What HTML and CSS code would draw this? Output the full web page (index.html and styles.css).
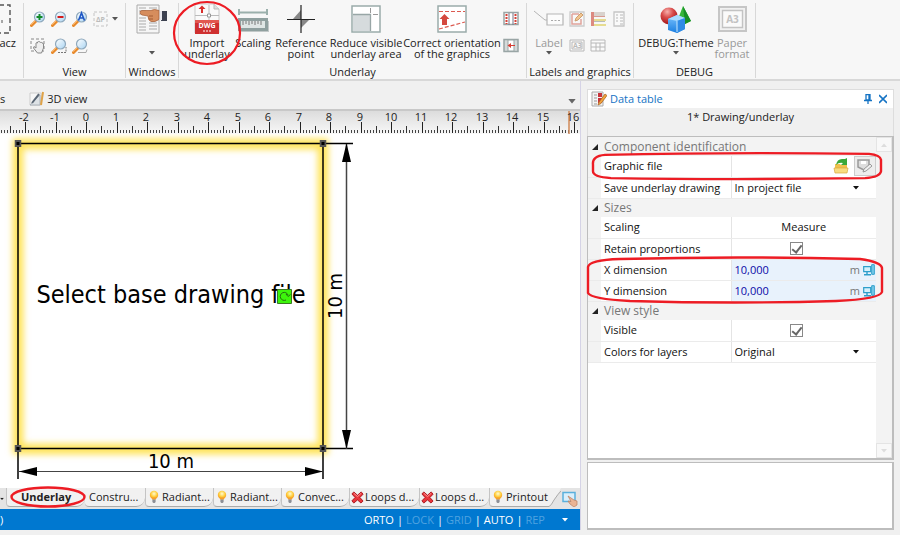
FILE: index.html
```html
<!DOCTYPE html>
<html lang="en">
<head>
<meta charset="utf-8">
<title>Drawing editor</title>
<link rel="stylesheet" href="styles.css">
</head>
<body>
<svg class="defs" aria-hidden="true">
  <defs>
    <linearGradient id="lens" x1="0" y1="0" x2="1" y2="1"><stop offset="0" stop-color="#fff"/><stop offset="1" stop-color="#a9d4f2"/></linearGradient>
    <linearGradient id="cube" x1="0" y1="0" x2="0" y2="1"><stop offset="0" stop-color="#7cc4ff"/><stop offset="1" stop-color="#1a7ee0"/></linearGradient>
    <radialGradient id="ball" cx=".4" cy=".25" r=".7"><stop offset="0" stop-color="#f7b0ac"/><stop offset=".5" stop-color="#d84a48"/><stop offset="1" stop-color="#a81c20"/></radialGradient>
    <radialGradient id="glowbulb" cx=".5" cy=".35" r=".6"><stop offset="0" stop-color="#fffbd0"/><stop offset=".6" stop-color="#ffce3c"/><stop offset="1" stop-color="#f59a22"/></radialGradient>
    <filter id="soft" x="-10%" y="-10%" width="120%" height="120%" color-interpolation-filters="sRGB"><feGaussianBlur stdDeviation="3"/></filter>
    <symbol id="mag" viewBox="0 0 16 16">
      <path d="M1.500 14.500 6 10" stroke="#e88a2c" stroke-width="3" stroke-linecap="round"/>
      <path d="M1.200 13.600 5 9.800" stroke="#ffc27a" stroke-width="1"/>
      <circle cx="9.500" cy="6" r="5" fill="url(#lens)" stroke="#8fa9bd" stroke-width="1.200"/>
    </symbol>
    <symbol id="bulb" viewBox="0 0 10 14">
      <circle cx="5" cy="5" r="4.200" fill="url(#glowbulb)"/>
      <path d="M3.200 7.500h3.600v2.200H3.200z" fill="#f5a02c"/>
      <path d="M3.400 9.600h3.200v2.400l-1 1H4.400l-1-1z" fill="#8c8f96"/>
    </symbol>
    <symbol id="cross" viewBox="0 0 14 14">
      <path d="M3 1 7 4.600 11 1 13 3.400 9.600 7 13 10.800 10.800 13 7 9.600 3 13 1 10.600 4.400 7 1 3.200z" fill="#e8353b" stroke="#a9151c" stroke-width="1"/>
      <path d="M3 2.400 7 6l4-3.600" stroke="#ff9a98" fill="none"/>
    </symbol>
    <symbol id="pc" viewBox="0 0 12 12">
      <path d="M.7 2.600h7v5h-7z" fill="#d5f0fb" stroke="#2e9fcb" stroke-width="1.200"/>
      <path d="M8.700.7h2.600v9.600H8.700z" fill="#7fcdea" stroke="#2e9fcb"/>
      <path d="M4 8v2M1 10.800h7" stroke="#2e9fcb" stroke-width="1.400"/>
    </symbol>
    <symbol id="down" viewBox="0 0 6 4"><path d="M0 0h6L3 3.500z" fill="currentColor"/></symbol>
    <symbol id="open" viewBox="0 0 6 6"><path d="M6 0v6H0z" fill="#222"/></symbol>
    <symbol id="handle" viewBox="0 0 7 7"><path d="M0 0h7v7H0z" fill="#555"/><path d="M2 2h3v3H2z" fill="#000"/></symbol>
  </defs>
</svg>

<header class="ribbon">
  <section class="group g-edge">
    <div class="tools">
      <button class="big cut" type="button">
        <svg class="ico" viewBox="0 0 32 34"><path d="M3 2h27v28H3z" fill="none" stroke="#555" stroke-width="1.400" stroke-dasharray="5 3"/><path d="M22 17v3" stroke="#555"/></svg>
        <span>Zaznacz</span>
      </button>
    </div>
  </section>

  <section class="group g-view">
    <div class="tools icons four">
      <button type="button" aria-label="Zoom in"><svg><use href="#mag"/><path d="M9.500 3v6M6.500 6h6" stroke="#138a2a" stroke-width="2"/></svg></button>
      <button type="button" aria-label="Zoom out"><svg><use href="#mag"/><path d="M6.500 6h6" stroke="#d41c1c" stroke-width="2"/></svg></button>
      <button type="button" aria-label="Zoom all"><svg><use href="#mag"/><path d="M6.500 9.500 9.500 2l3 7.500M7.500 7h4" fill="none" stroke="#1d55c4" stroke-width="1.600"/></svg></button>
      <button type="button" class="off" aria-label="Pressure view"><svg class="wide"><path d="M1 1h13v14H1z" fill="none" stroke="#c4c4c4" stroke-dasharray="3 2"/><text x="3" y="11" class="mini">ΔP</text><g color="#555"><use href="#down" x="19" y="6" width="6" height="4"/></g></svg></button>
      <button type="button" aria-label="Pan"><svg><path d="M1 1h13v12H1z" fill="none" stroke="#888" stroke-dasharray="3 2"/><path d="M4 8.500 6 10V5q1-1 1.500 0V4q1-1 1.500 0 1-1 1.500 0.500 1.500-.5 1.500.5 1.500 0 1.500 1v4l-2 5h-4L3.500 10z" fill="#eee" stroke="#888"/></svg></button>
      <button type="button" aria-label="Zoom window"><svg><use href="#mag"/><path d="M7 14.500h8V9" fill="none" stroke="#777" stroke-dasharray="2 1"/></svg></button>
      <button type="button" aria-label="Zoom page"><svg><use href="#mag"/><path d="M6 14.500h8l1-3" fill="none" stroke="#aaa"/></svg></button>
    </div>
    <h2>View</h2>
  </section>

  <section class="group g-win">
    <div class="tools">
      <button class="big" type="button" aria-label="Windows">
        <svg class="ico" viewBox="0 0 32 34"><path d="M1 2h22v28H1z" fill="#f6f6f6" stroke="#aaa"/><path d="M3 5h7M3 8h7M3 11h7M3 15h7M3 18h7M3 21h7M3 24h7M3 27h7M13 5h8M13 20h8M13 23h8M13 26h8" stroke="#aaa"/><path d="M26 8h5v10h-6z" fill="#3c4150"/><path d="M23 8h3v9h-3z" fill="#e8e8ee"/><path d="M4 9.500q0-2 2-2h9q3-2 8 0v9q-4 3-8 2-3-1-3-5.500l-6-1q-2-1-2-2.500z" fill="#d68d5d" stroke="#a45c34" stroke-width=".7"/><path d="M13 13h4M13 16h4" stroke="#a45c34"/></svg>
        <svg class="drop low"><use href="#down"/></svg>
      </button>
    </div>
    <h2>Windows</h2>
  </section>

  <section class="group g-under">
    <div class="tools under">
      <button class="big marked" type="button">
        <svg class="ico" viewBox="0 0 32 34"><path d="M4 1h19l5 5v24H4z" fill="#fafafa" stroke="#c9c9c9"/><path d="M23 1v5h5" fill="#ddd" stroke="#bbb"/><path d="M18 2v16M4 12.500h24" stroke="#bbb"/><path d="M16.500 11h3v3h-3z" fill="#fff" stroke="#999"/><path d="M11 2.500 14.500 6H12v4h-2V6H7.500z" fill="#d92d2a"/><path d="M4 17h24v14H4z" fill="#cf3030"/><path d="M4 17h24v3H4z" fill="#e2574f"/><text x="16" y="25" text-anchor="middle" class="dwg">DWG</text><path d="M12 28h2M15 28h2M18 28h2" stroke="#fff"/></svg>
        <span>Import<br>underlay</span>
        <svg class="mark-circle" viewBox="0 0 70 66"><ellipse cx="35" cy="33" rx="33" ry="31" fill="none" stroke="#ed1c24" stroke-width="2.200"/></svg>
      </button>
      <button class="big" type="button">
        <svg class="ico" viewBox="0 0 32 34"><path d="M2 9.500h28M2 6v6M30 6v6" stroke="#9bb0ac" stroke-width="2" fill="none"/><path d="M4 18h28v11H4z" fill="#c2c8c8"/><path d="M2.500 16.500h27v10h-27z" fill="#dfe6e5" stroke="#8fa09f" stroke-width="3"/><path d="M6 18v4M9 18v3M12 18v4M15 18v3M18 18v4M21 18v3M24 18v4" stroke="#777"/></svg>
        <span>Scaling</span>
      </button>
      <button class="big" type="button">
        <svg class="ico" viewBox="0 0 32 34"><path d="M16 7v9H8zM16 17v8l8-8z" fill="#888"/><path d="M16 2v28M2 16.500h28" stroke="#222" stroke-width="1.200"/></svg>
        <span>Reference<br>point</span>
      </button>
      <button class="big" type="button">
        <svg class="ico" viewBox="0 0 32 34"><path d="M2 3h28v26H2z" fill="#fff" stroke="#9bacab" stroke-width="1.500"/><path d="M3 12h17v16H3z" fill="#d6dbdd"/><path d="M3 11.500h17.500V28" fill="none" stroke="#98a6a6" stroke-width="1.300"/><path d="M20.500 5v5M23 11.500h5" stroke="#999"/></svg>
        <span>Reduce visible<br>underlay area</span>
      </button>
      <button class="big" type="button">
        <svg class="ico" viewBox="0 0 32 34"><path d="M2 3h28v26H2z" fill="#fff" stroke="#9bacab" stroke-width="1.500"/><path d="M3 8.500h26M3 26l26-7" stroke="#dc5a50" stroke-width="1.200" stroke-dasharray="4 2"/><path d="m8.500 11 5 5h-2.500v6h-5v-6H3.500z" fill="#d4493f"/></svg>
        <span>Correct orientation<br>of the graphics</span>
      </button>
      <div class="icons one">
        <button type="button" aria-label="Split columns"><svg><path d="M1 1.500h14v12H1z" fill="#fff" stroke="#99a5a5" stroke-width="1.500"/><path d="M6 2v12M10 2v12" stroke="#778"/><path d="M3.500 3v10M12.500 3v10" stroke="#d83f35" stroke-width="2" stroke-dasharray="2 1"/></svg></button>
        <button type="button" aria-label="Shift column"><svg><path d="M1 1.500h14v12H1z" fill="#d5dada" stroke="#99a5a5" stroke-width="1.500"/><path d="M5 2h6v11H5z" fill="#fff" stroke="#99a5a5"/><path d="M4.500 7.500 8 5v2h4v1H8v2z" fill="#d83f35"/></svg></button>
      </div>
    </div>
    <h2>Underlay</h2>
  </section>

  <section class="group g-labels">
    <div class="tools labels">
      <button class="big off" type="button">
        <svg class="ico" viewBox="0 0 32 34"><path d="m1 8 11 9h4" fill="none" stroke="#b5b5b5"/><path d="M14 11h16v11H14z" fill="#fcfcfc" stroke="#b5b5b5" stroke-width="1.200"/><path d="M18 17.500h2M21.500 17.500h2M25 17.500h2" stroke="#aaa"/></svg>
        <span>Label</span>
        <svg class="drop"><use href="#down"/></svg>
      </button>
      <div class="icons three off">
        <button type="button" aria-label="Edit label"><svg><path d="M1 1h14v14H1z" fill="#f8f8f8" stroke="#ccc" stroke-width="1.300"/><path d="M3 3h7M3 3v10h9V8" fill="none" stroke="#e0a39a" stroke-width="1.500"/><path d="m6 10 1-3 5-5 2 2-5 5z" fill="#f2c58f" stroke="#cc9f70"/></svg></button>
        <button type="button" aria-label="Legend"><svg><path d="M1 1h3v14H1z" fill="#dc8a80"/><path d="M4 1h11v5H4z" fill="#d9d2cd"/><path d="M4 5.500h11" stroke="#d89a90"/><path d="M4 8h12v2H4z" fill="#e6dc90"/><path d="M4 10.500h11" stroke="#b8bcb8"/><path d="M4 13h12v2H4z" fill="#e6dc90"/></svg></button>
        <button type="button" aria-label="Sheet"><svg><path d="M3 1h10v14H3z" fill="#fafafa" stroke="#c6c6c6" stroke-width="1.300"/><path d="M5 4h2M5 7h2M5 10h2M9 4h3M9 7h3M9 10h3M9 13h3" stroke="#b8b8b8"/></svg></button>
        <button type="button" aria-label="Frame"><svg><path d="M1 2h14v11H1zM3 4h10v7H3z" fill="#fafafa" stroke="#b8b8b8"/><text x="4" y="10" class="mini">A3</text></svg></button>
        <button type="button" aria-label="Table"><svg><path d="M1 2h14v11H1zM1 5h14M1 9h14M6 5v8M10 5v8" fill="#fafafa" stroke="#b8b8b8"/></svg></button>
      </div>
    </div>
    <h2>Labels and graphics</h2>
  </section>

  <section class="group g-debug">
    <div class="tools debug">
      <button class="big" type="button">
        <svg class="ico" viewBox="0 0 32 34"><path d="m23 3 8 15-6 3-7-5z" fill="#35b63a"/><path d="m23 3 2 18 6-3z" fill="#178f26"/><circle cx="9" cy="13" r="8.500" fill="url(#ball)"/><path d="m8 16 9-4 8 3v11l-8 4-9-3z" fill="url(#cube)"/><path d="m8 16 9-4 8 3-8 3z" fill="#a9dcff"/><path d="M17 18v12l8-4V15z" fill="#2f8be6"/><path d="M17 18v11" stroke="#c8e8ff"/></svg>
        <span>DEBUG:Theme</span>
        <svg class="drop"><use href="#down"/></svg>
      </button>
      <button class="big off" type="button">
        <svg class="ico" viewBox="0 0 32 34"><path d="M3 4h27v24H3z" fill="#f1f1f1" stroke="#c6c6c6" stroke-width="2"/><path d="M6.500 7.500h20v17h-20z" fill="#fafafa" stroke="#c3c3c3" stroke-width="1.400"/><text x="16.500" y="20" text-anchor="middle" class="a3">A3</text></svg>
        <span>Paper<br>format</span>
      </button>
    </div>
    <h2>DEBUG</h2>
  </section>
</header>

<main class="work">
  <section class="editor">
    <nav class="views">
      <a href="#plan" class="prev">s</a>
      <a href="#view3d"><svg class="v3d" viewBox="0 0 16 16"><path d="M1 2h11v12H1z" fill="#f6f6f6" stroke="#ccc"/><path d="M1 14 11 4v10z" fill="#dde2e6" stroke="#aab2ba"/><path d="M3 12 10 3" stroke="#5a6674" stroke-width="2"/><path d="m14 1-2 13" stroke="#dfa247" stroke-width="2"/></svg>3D view</a>
      <button type="button" class="more" aria-label="More views"><svg viewBox="0 0 6 4"><use href="#down"/></svg></button>
    </nav>
    <svg class="ruler" role="img" aria-label="Ruler">
      <defs>
        <pattern id="ticks" x="25" y="0" width="61" height="23" patternUnits="userSpaceOnUse">
          <path d="M.5 11v11M31.500 11v11" stroke="#222"/>
          <path d="M15.500 15v7M46.500 15v7" stroke="#333"/>
          <path d="M3.500 19v3M6.500 19v3M9.500 19v3M12.500 19v3M18.500 19v3M21.500 19v3M24.500 19v3M27.500 19v3M34.500 19v3M37.500 19v3M40.500 19v3M43.500 19v3M49.500 19v3M52.500 19v3M55.500 19v3M58.500 19v3" stroke="#444"/>
        </pattern>
      </defs>
      <rect width="100%" height="22" fill="url(#ticks)"/>
      <path d="M569 0v23" stroke="#d08a58" stroke-width="1.500"/>
      <g class="nums">
        <text x="24" y="10">-2</text><text x="55" y="10">-1</text><text x="86" y="10">0</text><text x="116" y="10">1</text><text x="146" y="10">2</text><text x="177" y="10">3</text><text x="207" y="10">4</text><text x="238" y="10">5</text><text x="268" y="10">6</text><text x="299" y="10">7</text><text x="329" y="10">8</text><text x="360" y="10">9</text><text x="391" y="10">10</text><text x="421" y="10">11</text><text x="451" y="10">12</text><text x="482" y="10">13</text><text x="512" y="10">14</text><text x="543" y="10">15</text><text x="573" y="10">16</text>
      </g>
    </svg>
    <svg class="canvas" role="img" aria-label="Drawing">
      <rect x="18" y="10" width="305" height="305" fill="none" stroke="#ffe45c" stroke-width="11" filter="url(#soft)"/>
      <path d="M18 9.500h335M18 314.500h335M18 10v335M323 10v335" fill="none" stroke="#000" stroke-width="1.500"/>
      <path d="M346.500 10v305" stroke="#444" stroke-width="1.500"/>
      <path d="M18 337.500h305" stroke="#444" stroke-width="1"/>
      <path d="m346.500 9 4.500 19h-9zM346.500 315l4.500-19h-9zM19 337.500l18-4.500v9zM323 337.500l-18-4.500v9z"/>
      <use href="#handle" x="14.500" y="6" width="7" height="7"/><use href="#handle" x="319.500" y="6" width="7" height="7"/>
      <use href="#handle" x="14.500" y="311" width="7" height="7"/><use href="#handle" x="319.500" y="311" width="7" height="7"/>
      <text x="171" y="169" text-anchor="middle" class="prompt">Select base drawing file</text>
      <path d="M277.500 155.500h14v14h-14z" fill="#3df50c" stroke="#3a7a20"/>
      <path d="M286 166a4 4 0 1 1 2-5M286 160l2 2.500 2.500-2" fill="none" stroke="#256b12"/>
      <text x="171" y="334" text-anchor="middle" class="dim">10 m</text>
      <text transform="translate(342 162) rotate(-90)" text-anchor="middle" class="dim">10 m</text>
    </svg>
    <nav class="sheets">
      <button type="button" class="pick" aria-label="Sheet list"><svg viewBox="0 0 6 4"><use href="#down"/></svg></button>
      <a href="#s1" class="sheet now">Underlay<svg class="mark-tab" viewBox="0 0 76 22"><ellipse cx="38" cy="11" rx="36.500" ry="9.500" fill="none" stroke="#ed1c24" stroke-width="2.400"/></svg></a>
      <a href="#s2" class="sheet slim">Constru...</a>
      <a href="#s3" class="sheet"><svg class="b"><use href="#bulb"/></svg>Radiant...</a>
      <a href="#s4" class="sheet"><svg class="b"><use href="#bulb"/></svg>Radiant...</a>
      <a href="#s5" class="sheet"><svg class="b"><use href="#bulb"/></svg>Convec...</a>
      <a href="#s6" class="sheet loop"><svg class="x"><use href="#cross"/></svg>Loops d...</a>
      <a href="#s7" class="sheet loop"><svg class="x"><use href="#cross"/></svg>Loops d...</a>
      <a href="#s8" class="sheet last"><svg class="b"><use href="#bulb"/></svg>Printout</a>
      <svg class="slant" viewBox="0 0 12 19"><path d="M0 0h12Q9 6 5 12 2 18 0 18z" fill="#f1f1f1"/><path d="M12 3Q9 6 5 12 2 18 0 18.500" fill="none" stroke="#aaa"/></svg>
      <button type="button" class="tap" aria-label="Select by pointing"><svg viewBox="0 0 16 16"><path d="M1 1.500h12v9H1z" fill="#d9effb" stroke="#5ab0dc" stroke-width="1.500"/><path d="m6 5 6 4 3 1v4l-3 2-4-3-2-3 3 .5z" fill="#e9b494" stroke="#bd7e5d" stroke-width=".7"/></svg></button>
    </nav>
    <footer class="status">
      <span class="edge">)</span>
      <button type="button">ORTO</button><i>|</i><button type="button" class="dimmed">LOCK</button><i>|</i><button type="button" class="dimmed">GRID</button><i>|</i><button type="button">AUTO</button><i>|</i><button type="button" class="dimmed">REP</button>
      <button type="button" class="menu" aria-label="Status options"><svg viewBox="0 0 6 4"><use href="#down"/></svg></button>
    </footer>
  </section>

  <aside class="panel">
    <div class="title">
      <svg class="dt" viewBox="0 0 16 16"><path d="M1 1h11v14H1z" fill="#f4f4f4" stroke="#aaa"/><path d="M3 4h3M3 7h3M3 10h3M3 13h3" stroke="#999"/><path d="M7 2h4v4H7zM7 7h4v5H7z" fill="#c8343c"/><path d="m7 14 1-3 6-8 2 1.500-6 8z" fill="#f0a33c" stroke="#a55f22" stroke-width=".7"/></svg>
      <h1>Data table</h1>
      <button type="button" aria-label="Pin"><svg viewBox="0 0 8 10"><path d="M2 .5h4v5.500H2zM5 .5v5M0 6.500h8M4 7v3" fill="none" stroke="#1573c4" stroke-width="1.300"/></svg></button>
      <button type="button" aria-label="Close"><svg viewBox="0 0 8 10"><path d="m0 1 8 8M8 1 0 9" stroke="#1573c4" stroke-width="1.600"/></svg></button>
    </div>
    <p class="subject">1* Drawing/underlay</p>
    <div class="list">
      <div class="sheetbox">
      <table class="props">
        <colgroup><col class="c-gut"><col class="c-name"><col></colgroup>
        <tbody>
          <tr class="head"><td><svg class="fold"><use href="#open"/></svg></td><th colspan="2">Component identification</th></tr>
          <tr class="ringed"><td></td><th><label for="file">Graphic file</label></th><td><div class="cell"><input id="file" type="text">
            <button type="button" aria-label="Open file"><svg class="act" viewBox="0 0 16 16"><path d="M2 6h5l1 1h6v8H2z" fill="#f0c04c"/><path d="M1 10h14l-1 5H2z" fill="#f8dc80" stroke="#d9a93c" stroke-width=".7"/><path d="M3 7q1-6 6-6h3l2-1v7H8l2-2Q6 4 3 7z" fill="#3aa83a"/></svg></button>
            <button type="button" class="boxed" aria-label="Edit file"><svg class="act" viewBox="0 0 16 16"><path d="M1 2h11v6L7 12 1 9z" fill="#ddd" stroke="#9a9a9a" stroke-width="1.500"/><path d="M4 3h5v3H4z" fill="#fff"/><path d="m6 14 1-3 6-5 2 2-6 5z" fill="#eee" stroke="#9a9a9a"/></svg></button></div>
            <svg class="mark-row" viewBox="0 0 292 30" preserveAspectRatio="none"><path d="M2 13Q1 4 14 3Q140 0 278 2Q289 3 290 8V20Q289 26 274 27Q140 29 20 27Q2 26 2 20z" fill="none" stroke="#ed1c24" stroke-width="2.400"/></svg></td></tr>
          <tr><td></td><th><label for="save">Save underlay drawing</label></th><td><div class="cell pickone"><select id="save"><option>In project file</option></select><svg class="tri"><use href="#down"/></svg></div></td></tr>
          <tr class="head"><td><svg class="fold"><use href="#open"/></svg></td><th colspan="2">Sizes</th></tr>
          <tr><td></td><th>Scaling</th><td><button type="button" class="measure">Measure</button></td></tr>
          <tr><td></td><th><label for="keep">Retain proportions</label></th><td class="mid"><input id="keep" type="checkbox" checked></td></tr>
          <tr class="blue ringed"><td></td><th><label for="dx">X dimension</label></th><td><div class="cell"><input id="dx" type="text" value="10,000"><span class="unit">m</span><svg class="pc"><use href="#pc"/></svg></div>
            <svg class="mark-dims" viewBox="0 0 298 48" preserveAspectRatio="none"><path d="M2 11Q3 4 34 3Q150 0 274 3Q295 6 296 12V36Q294 43 250 45Q150 48 44 45Q5 43 2 37z" fill="none" stroke="#ed1c24" stroke-width="2.400"/></svg></td></tr>
          <tr class="blue"><td></td><th><label for="dy">Y dimension</label></th><td><div class="cell"><input id="dy" type="text" value="10,000"><span class="unit">m</span><svg class="pc"><use href="#pc"/></svg></div></td></tr>
          <tr class="head"><td><svg class="fold"><use href="#open"/></svg></td><th colspan="2">View style</th></tr>
          <tr><td></td><th><label for="vis">Visible</label></th><td class="mid"><input id="vis" type="checkbox" checked></td></tr>
          <tr><td></td><th><label for="col">Colors for layers</label></th><td><div class="cell pickone"><select id="col"><option>Original</option></select><svg class="tri"><use href="#down"/></svg></div></td></tr>
        </tbody>
      </table>
      </div>
      <div class="scroll">
        <button type="button" aria-label="Scroll up"><svg viewBox="0 0 6 4"><path d="m0 4 3-3.500L6 4z" fill="#ddd"/></svg></button>
        <button type="button" aria-label="Scroll down"><svg viewBox="0 0 6 4"><path d="M0 0h6L3 3.500z" fill="#ddd"/></svg></button>
      </div>
    </div>
    <div class="notes"></div>
  </aside>
</main>
</body>
</html>
```

FILE: styles.css
```css
* { box-sizing: border-box; }
body {
  margin: 0;
  min-height: 100vh;
  display: flex;
  flex-direction: column;
  background: #f0f0f0;
  color: #222;
  font: 11px/16px "Open Sans", "Noto Sans", sans-serif;
  overflow: hidden;
}
button, input, select { font: inherit; color: inherit; margin: 0; padding: 0; border: 0; background: none; }
button { cursor: pointer; }
a { color: inherit; text-decoration: none; }
h1, h2, p { margin: 0; font-size: 11px; font-weight: 400; }
svg { display: block; flex: none; }
.defs { position: absolute; width: 0; height: 0; }

/* Ribbon */
.ribbon {
  display: flex;
  padding: 3px 0 1px;
  background: #f7f7f7;
  border-bottom: 2px solid #d8d8d8;
}
.group {
  display: flex;
  flex-direction: column;
  justify-content: space-between;
  height: 75px;
  flex: none;
  border-right: 1px solid #d8d8d8;
}
.group h2 { text-align: center; line-height: 12px; white-space: nowrap; }
.g-edge { width: 24px; overflow: hidden; }
.g-view { width: 102px; }
.g-win { width: 53px; }
.g-under { width: 348px; }
.g-labels { width: 107px; }
.g-debug { width: 122px; }
.tools { display: flex; justify-content: center; }
.g-edge .tools { justify-content: flex-end; padding-right: 7px; }
.big {
  display: flex;
  flex-direction: column;
  align-items: center;
  line-height: 11px;
  white-space: nowrap;
}
.cut { align-items: flex-end; }
.cut .ico { margin-right: 4px; }
.ico { width: 32px; height: 34px; }
.drop { width: 6px; height: 4px; margin-top: 3px; color: #555; }
.low { margin-top: 14px; }
.off { color: #999; }
.icons { display: grid; grid-auto-rows: 27px; padding: 8px 0 0 6px; align-content: start; }
.icons svg { width: 16px; height: 16px; overflow: visible; fill: none; }
.icons button { display: block; height: 16px; }
.four { grid-template-columns: repeat(4, 21px); justify-content: start; }
.three { grid-template-columns: repeat(3, 21px); }
.tools .one { padding-left: 0; }
.mini { font-size: 7px; font-weight: 700; fill: #bbb; }
.dwg { font-size: 7px; font-weight: 700; fill: #fff; }
.a3 { font-size: 10px; font-weight: 700; fill: #c2c2c2; }
.under {
  display: grid;
  grid-template-columns: 56px 36px 60px 70px 102px 20px;
  justify-content: start;
}
.under .big { justify-self: center; }
.labels { display: grid; grid-template-columns: 36px 63px; justify-content: start; padding-left: 4px; }
.labels .icons { padding-left: 2px; }
.debug { display: grid; grid-template-columns: 84px 28px; justify-content: start; }
.debug .big { justify-self: center; }
.marked { position: relative; }
.mark-circle { position: absolute; width: 70px; height: 66px; top: -3px; left: 50%; margin-left: -35px; z-index: 3; }

/* Drawing editor */
.work { flex: 1; display: flex; gap: 6px; padding-right: 6px; }
.editor {
  flex: 1;
  min-width: 0;
  display: flex;
  flex-direction: column;
  margin-bottom: 5px;
  border-right: 1px solid #d5d3e6;
}
.views { display: flex; align-items: center; gap: 24px; height: 28px; padding-top: 8px; }
.views a { display: flex; align-items: center; gap: 2px; }
.v3d { width: 16px; height: 16px; }
.more { margin-left: auto; padding: 5px 4px 0 0; color: #666; }
.more svg { width: 8px; height: 5px; }
.ruler {
  width: 100%;
  height: 25px;
  border-top: 2px solid #c8c8c8;
  background: linear-gradient(#dcdcdc, #f8f8f8);
}
.nums { font-size: 11px; text-anchor: middle; fill: #222; }
.canvas { width: 100%; flex: 1; background: #fff; font-family: "DejaVu Sans Condensed", "DejaVu Sans", sans-serif; }
.prompt { font-size: 25px; }
.dim { font-size: 20px; }
.sheets { display: flex; height: 21px; background: #e4e4e4; overflow: visible; }
.sheet {
  display: flex;
  align-items: center;
  gap: 3px;
  width: 68px;
  height: 19px;
  padding-left: 3px;
  background: #f1f1f1;
  border-left: 1px solid #c4c4c4;
  border-bottom: 1px solid #aaa;
  border-radius: 0 0 9px 4px;
  white-space: nowrap;
}
.pick { width: 6px; }
.pick svg { width: 4px; height: 4px; }
.now { position: relative; width: 79px; padding-left: 14px; font-weight: 700; }
.slim { width: 60px; padding-left: 4px; border-left: 0; }
.loop { width: 70px; padding-left: 1px; gap: 1px; }
.last { width: 60px; border-radius: 0 0 0 4px; }
.b { width: 10px; height: 14px; }
.x { width: 13px; height: 13px; }
.slant { width: 12px; height: 19px; }
.tap { margin-left: auto; padding-right: 2px; }
.tap svg { width: 16px; height: 16px; }
.mark-tab { position: absolute; left: 3px; top: -2px; width: 76px; height: 22px; z-index: 3; }
.status {
  display: flex;
  align-items: center;
  justify-content: flex-end;
  gap: 3px;
  height: 21px;
  padding-right: 12px;
  background: #0078d0;
  color: #fff;
}
.status i { font-style: normal; }
.edge { margin-right: auto; }
.dimmed { color: #4fa3e0; }
.menu { padding-left: 14px; }
.menu svg { width: 6px; height: 4px; }

/* Data table panel */
.panel { flex: none; width: 307px; display: flex; flex-direction: column; margin: 8px 0 5px; }
.title {
  display: flex;
  align-items: center;
  gap: 7px;
  height: 19px;
  padding: 0 6px 0 3px;
  background: #fff;
  border: 1px solid #ddd;
  border-bottom: 0;
  color: #1573c4;
}
.title h1 { flex: 1; margin-left: -4px; }
.title svg { width: 8px; height: 10px; }
.title .dt { width: 16px; height: 16px; }
.subject { height: 28px; padding-top: 1px; text-align: center; border: solid #ddd; border-width: 0 1px; }
.list {
  flex: 1;
  display: flex;
  align-items: stretch;
  background: #fff;
  border: 2px solid #bdbdbd;
  border-width: 1px 2px 2px 1px;
}
.sheetbox { flex: 1; min-width: 0; }
.props { width: 100%; border-collapse: collapse; table-layout: fixed; color: #111; }
.c-gut { width: 13px; }
.c-name { width: 130px; }
.props tr { height: 21px; }
.props td, .props th { padding: 0; border-bottom: 1px solid #ebebeb; font-weight: 400; text-align: left; }
.props th { padding-left: 3px; white-space: nowrap; }
.props td:first-child { background: #f3f3f3; }
.props td:last-child { border-left: 1px solid #e4e4e4; }
.props .head { height: 19px; }
.props .head td, .props .head th { background: #f3f3f3; border: 0; }
.props .head th { font-size: 12px; color: #777; }
.fold { width: 6px; height: 6px; margin: 0 auto; }
.ringed td:last-child { position: relative; }
.cell { display: flex; align-items: center; height: 20px; padding-left: 3px; }
.cell input { flex: 1; min-width: 0; }
.blue .cell { background: #e8f2fc; color: #0a0aa8; }
.cell .unit { color: #777; }
.pc { width: 12px; height: 12px; margin: 0 1px 0 3px; }
.act { width: 16px; height: 16px; }
.boxed { margin-left: 5px; padding: 1px 2px; border: 1px solid #ccc; background: #ededed; }
.pickone { display: grid; grid-template-columns: 1fr 23px; }
.pickone select { grid-area: 1 / 1 / 2 / 3; appearance: none; width: 100%; }
.tri { grid-area: 1 / 2; width: 6px; height: 4px; pointer-events: none; }
.measure { display: block; width: 100%; }
.props .mid { padding-right: 14px; }
.mid input {
  appearance: none;
  display: block;
  width: 13px;
  height: 13px;
  margin: 0 auto;
  border: 1px solid #888;
  background: #fff;
}
.mid input::before {
  content: "";
  display: block;
  width: 4px;
  height: 8px;
  margin: 0 auto;
  border: solid #666;
  border-width: 0 2px 2px 0;
  transform: rotate(38deg);
}
.mark-row { position: absolute; top: -4px; right: -7px; width: 292px; height: 29px; z-index: 3; pointer-events: none; }
.mark-dims { position: absolute; top: -4px; right: -8px; width: 298px; height: 48px; z-index: 3; pointer-events: none; }
.scroll { width: 16px; display: flex; flex-direction: column; justify-content: space-between; background: #f3f3f3; }
.scroll button { height: 15px; border: 1px solid #e4e4e4; background: #f8f8f8; }
.scroll svg { width: 6px; height: 4px; margin: 0 auto; }
.notes { height: 68px; margin-top: 2px; background: #fff; border: 2px solid #bdbdbd; border-width: 1px 2px 2px 1px; }
```
